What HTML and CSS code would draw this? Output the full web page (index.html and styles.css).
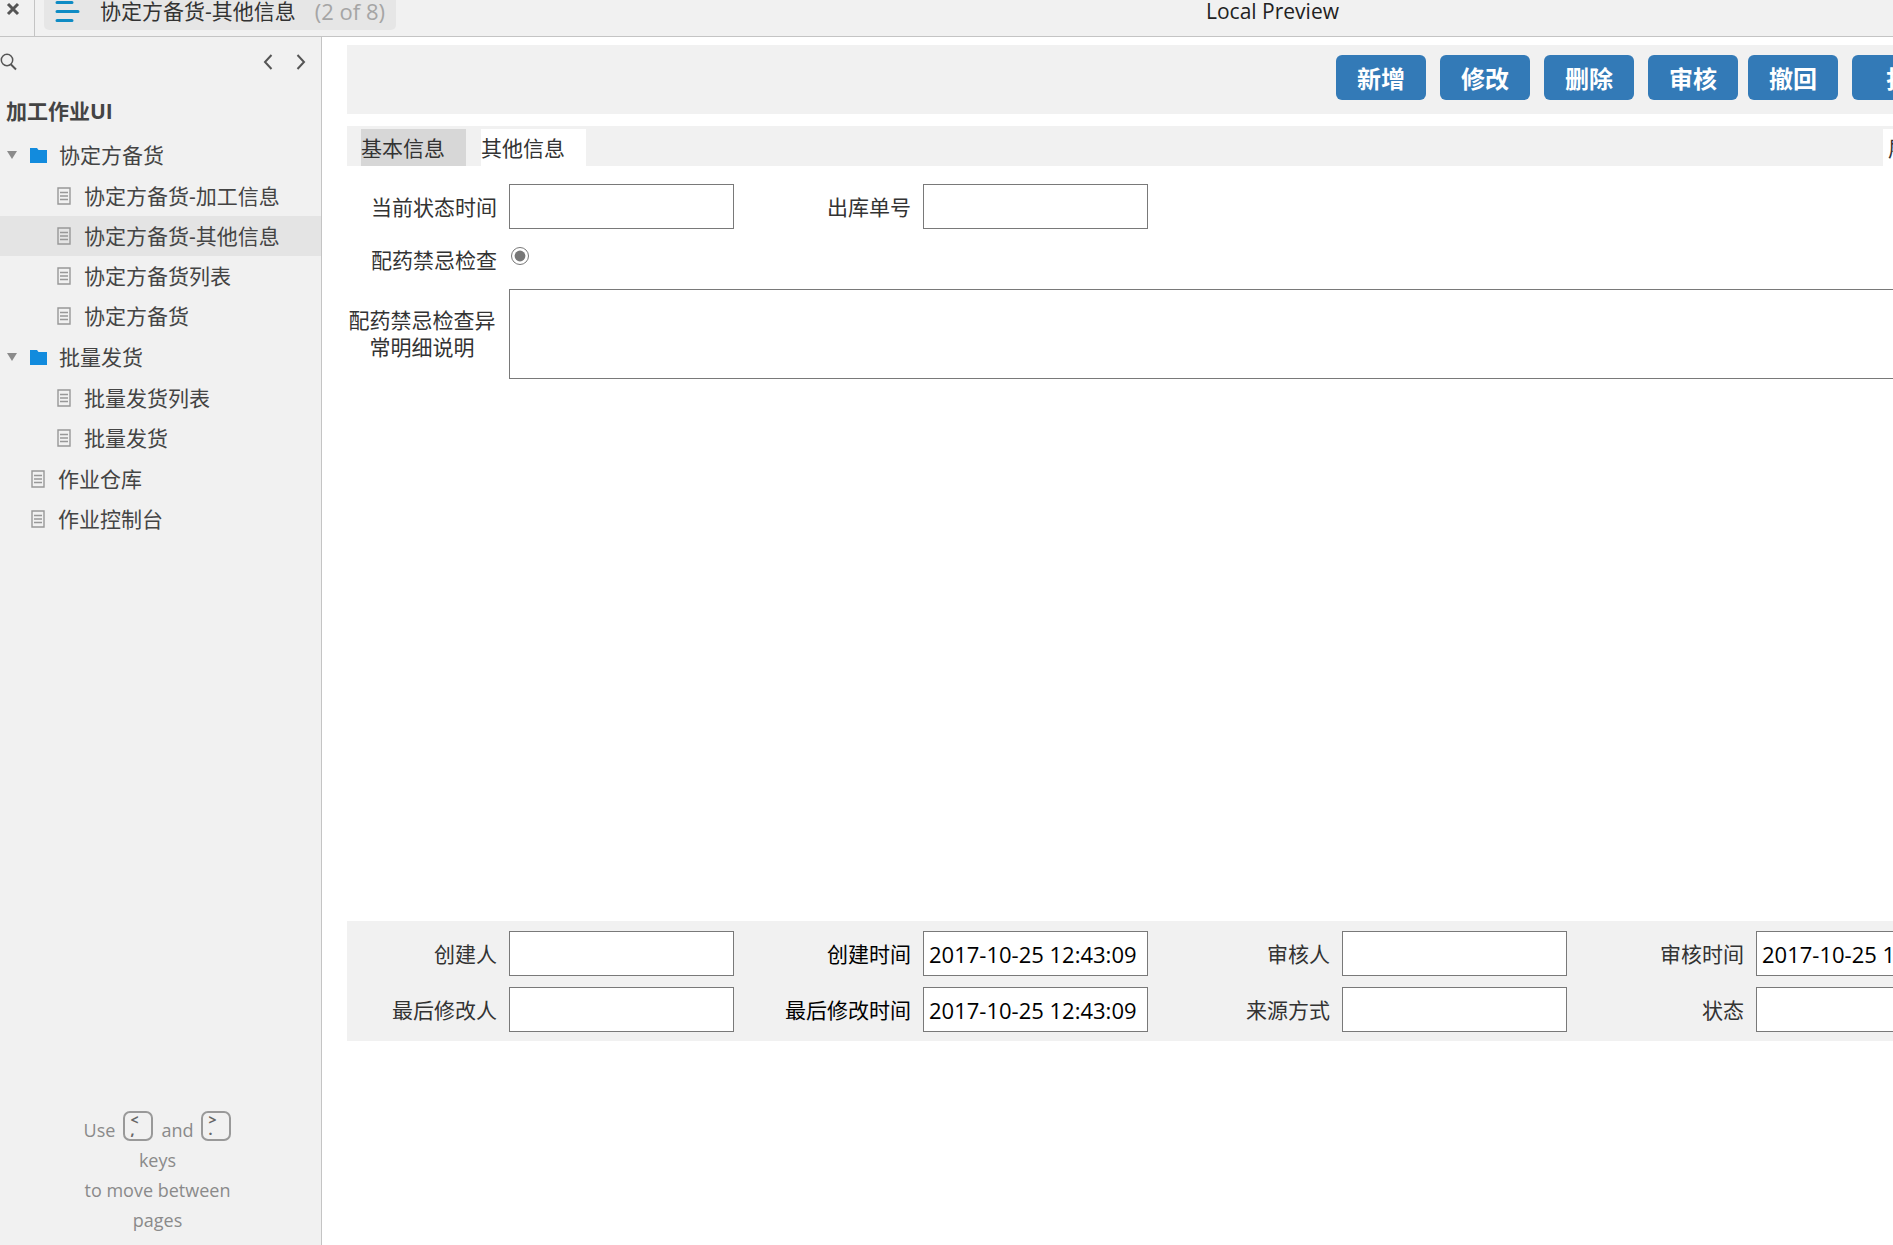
FILE: index.html
```html
<!DOCTYPE html>
<html lang="zh-CN">
<head>
<meta charset="utf-8">
<title>协定方备货-其他信息</title>
<link rel="stylesheet" href="styles.css">
</head>
<body>
<svg class="defs" aria-hidden="true">
  <symbol id="page" viewBox="0 0 14 18"><path d="M1 1h12v16H1z M3 5.500h8 M3 9h8 M3 12.500h8" fill="none" stroke="#989898" stroke-width="1.400"/></symbol>
  <symbol id="folder" viewBox="0 0 17 15"><path d="M0 0h7l1.500 2H17v13H0z" fill="#128bdd"/></symbol>
  <symbol id="tri" viewBox="0 0 10 8"><path d="M0 0h10L5 8z" fill="#8b8b8b"/></symbol>
</svg>
<header class="topbar">
  <button class="close" aria-label="Close"><svg width="14" height="14" viewBox="0 0 14 14"><path d="M2 2l10 10M12 2L2 12" stroke="#555" stroke-width="3"/></svg></button>
  <button class="pill">
    <svg width="25" height="24" viewBox="0 0 25 24"><path d="M2 3.500h15M2 12.500h21M2 21.500h15" stroke="#0e8bc4" stroke-width="3" stroke-linecap="round"/></svg>
    <span class="pill-name">协定方备货-其他信息</span><span class="pill-count">(2 of 8)</span>
  </button>
  <div class="preview">Local Preview</div>
</header>
<div class="body">
  <nav class="sidebar">
    <div class="tools">
      <button class="icon" aria-label="Search"><svg width="17" height="18" viewBox="0 0 17 18"><circle cx="7" cy="7" r="5.700" fill="none" stroke="#555" stroke-width="1.500"/><path d="M10.500 11L16 16.500" stroke="#555" stroke-width="2"/></svg></button>
      <span class="pager">
        <button class="icon" aria-label="Previous"><svg width="10" height="16" viewBox="0 0 10 16"><path d="M8.500 1L2 8l6.500 7" fill="none" stroke="#555" stroke-width="2"/></svg></button>
        <button class="icon" aria-label="Next"><svg width="10" height="16" viewBox="0 0 10 16"><path d="M1.500 1L8 8l-6.500 7" fill="none" stroke="#555" stroke-width="2"/></svg></button>
      </span>
    </div>
    <h1>加工作业UI</h1>
    <ul class="tree">
      <li><a href="#" class="row"><svg class="tri"><use href="#tri"/></svg><svg class="folder"><use href="#folder"/></svg>协定方备货</a>
        <ul>
          <li><a href="#" class="row child"><svg class="page"><use href="#page"/></svg>协定方备货-加工信息</a></li>
          <li><a href="#" class="row child selected"><svg class="page"><use href="#page"/></svg>协定方备货-其他信息</a></li>
          <li><a href="#" class="row child"><svg class="page"><use href="#page"/></svg>协定方备货列表</a></li>
          <li><a href="#" class="row child"><svg class="page"><use href="#page"/></svg>协定方备货</a></li>
        </ul>
      </li>
      <li><a href="#" class="row"><svg class="tri"><use href="#tri"/></svg><svg class="folder"><use href="#folder"/></svg>批量发货</a>
        <ul>
          <li><a href="#" class="row child"><svg class="page"><use href="#page"/></svg>批量发货列表</a></li>
          <li><a href="#" class="row child"><svg class="page"><use href="#page"/></svg>批量发货</a></li>
        </ul>
      </li>
      <li><a href="#" class="row leaf"><svg class="page"><use href="#page"/></svg>作业仓库</a></li>
      <li><a href="#" class="row leaf"><svg class="page"><use href="#page"/></svg>作业控制台</a></li>
    </ul>
    <div class="hint">
      <div class="keys">Use <kbd><span>&lt;</span><span>,</span></kbd> and <kbd><span>&gt;</span><span>.</span></kbd></div>
      <div>keys</div><div>to move between</div><div>pages</div>
    </div>
  </nav>
  <main class="main">
    <div class="actions">
      <button class="btn">新增</button><button class="btn">修改</button><button class="btn">删除</button><button class="btn near">审核</button><button class="btn">撤回</button><button class="btn last">打印</button>
    </div>
    <div class="tabs">
      <button class="tab idle">基本信息</button><button class="tab">其他信息</button><button class="tab expand">展开</button>
    </div>
    <form class="form">
      <label for="f1">当前状态时间</label><input class="field" id="f1" type="text">
      <label for="f2">出库单号</label><input class="field" id="f2" type="text">
      <label class="check-label" for="f3">配药禁忌检查</label><input class="radio" id="f3" type="radio" checked>
      <label class="note-label" for="f4">配药禁忌检查异常明细说明</label><textarea class="field note" id="f4"></textarea>
    </form>
    <form class="form audit">
      <label for="a1">创建人</label><input class="field" id="a1" type="text">
      <label class="dark" for="a2">创建时间</label><input class="field" id="a2" type="text" value="2017-10-25 12:43:09">
      <label for="a3">审核人</label><input class="field" id="a3" type="text">
      <label for="a4">审核时间</label><input class="field" id="a4" type="text" value="2017-10-25 12:43:09">
      <label for="a5">最后修改人</label><input class="field" id="a5" type="text">
      <label class="dark" for="a6">最后修改时间</label><input class="field" id="a6" type="text" value="2017-10-25 12:43:09">
      <label for="a7">来源方式</label><input class="field" id="a7" type="text">
      <label for="a8">状态</label><input class="field" id="a8" type="text">
    </form>
  </main>
</div>
</body>
</html>
```
FILE: styles.css
```css
* { box-sizing: border-box; }
body {
  margin: 0;
  height: 100vh;
  display: flex;
  flex-direction: column;
  overflow: hidden;
  background: #fff;
  color: #333;
  font: 21px/28px "Open Sans", "Noto Sans CJK SC", sans-serif;
}
button, input, textarea { font: inherit; color: inherit; border: 0; margin: 0; padding: 0; }
button { background: none; cursor: pointer; }
svg { display: block; flex: none; }
ul { list-style: none; margin: 0; padding: 0; }
.defs { position: absolute; width: 0; height: 0; }

.topbar {
  flex: none;
  display: grid;
  grid-template-columns: 35px 361px 1fr;
  height: 37px;
  background: #f1f1f1;
  border-bottom: 1px solid #c4c4c4;
}
.close { display: flex; align-items: center; padding: 0 0 18px 6px; border-right: 1px solid #c4c4c4; }
.pill {
  display: flex;
  align-items: center;
  height: 30px;
  margin-left: 9px;
  padding: 0 0 8px 11px;
  background: #e6e6e6;
  border-radius: 0 0 5px 5px;
  white-space: nowrap;
}
.pill-name { margin-left: 20px; }
.pill-count { margin-left: 19px; font-size: 22px; color: #a5a5a5; }
.preview { padding-left: 810px; line-height: 22px; white-space: nowrap; color: #222; }

.body { flex: 1; display: flex; min-height: 0; }
.sidebar {
  flex: none;
  width: 322px;
  display: flex;
  flex-direction: column;
  background: #f1f1f1;
  border-right: 1px solid #c4c4c4;
}
.tools { display: flex; justify-content: space-between; align-items: center; height: 50px; padding-right: 15px; }
.pager { display: flex; gap: 23px; }
.icon { display: block; }
h1 { margin: 10px 0 9px; padding-left: 6px; font-size: 21px; line-height: 29px; color: #444; }
.row { display: flex; align-items: center; height: 40px; padding-left: 7px; color: #444; text-decoration: none; }
.tree ul { margin: 1px 0; }
.child { padding-left: 57px; }
.leaf { padding-left: 31px; }
.selected { background: #e4e4e4; }
.tri { width: 10px; height: 8px; margin-right: 13px; }
.folder { width: 17px; height: 15px; margin-right: 12px; }
.page { width: 14px; height: 18px; margin-right: 13px; }
.hint { margin-top: auto; padding: 0 6px 10px 0; text-align: center; font-size: 18px; line-height: 30px; color: #8a8a8a; }
.keys { display: flex; justify-content: center; gap: 8px; }
kbd {
  display: flex;
  flex-direction: column;
  width: 30px;
  height: 30px;
  margin-top: -4px;
  padding-left: 5px;
  border: 2px solid #999;
  border-radius: 7px;
  font: 700 14px/14px "Open Sans", sans-serif;
  color: #666;
  text-align: left;
}
kbd span + span { line-height: 6px; }

.main { flex: 1; min-width: 0; overflow: hidden; padding: 8px 0 0 25px; }
.actions { display: flex; height: 69px; padding: 10px 0 0 989px; background: #f1f1f1; }
.btn {
  flex: none;
  width: 90px;
  height: 45px;
  margin-right: 14px;
  padding-top: 2px;
  border-radius: 6px;
  background: #337ab7;
  color: #fff;
  font-size: 24px;
  font-weight: 700;
}
.near { margin-right: 10px; }
.last { width: 116px; margin: 0; }
.tabs { display: flex; height: 40px; margin-top: 12px; padding: 3px 0 0 14px; background: #f1f1f1; }
.tab { flex: none; width: 105px; margin-right: 15px; background: #fff; text-align: left; }
.idle { background: #d7d7d7; }
.expand { margin: 0 0 0 1282px; padding-left: 5px; }
.form {
  display: grid;
  grid-template-columns: 150px 225px 165px 225px 170px 225px 165px 225px;
  column-gap: 12px;
  align-items: center;
  padding-top: 18px;
}
.form label { text-align: right; white-space: nowrap; }
.form .dark { color: #000; }
.field { display: block; width: 100%; height: 45px; padding: 0 5px; border: 1px solid #797979; border-radius: 0; background: #fff; color: #000; font-size: 22px; }
.form .check-label { grid-column: 1; padding: 17px 0 15px; }
.radio { width: 18px; height: 18px; margin: 0 2px 6px; accent-color: #777; }
.form .note-label { grid-column: 1; white-space: normal; text-align: center; line-height: 27px; }
.note { grid-column: 2 / -1; height: 90px; resize: none; }
.audit { margin-top: 542px; padding: 10px 0 9px; row-gap: 11px; background: #f1f1f1; }
```
